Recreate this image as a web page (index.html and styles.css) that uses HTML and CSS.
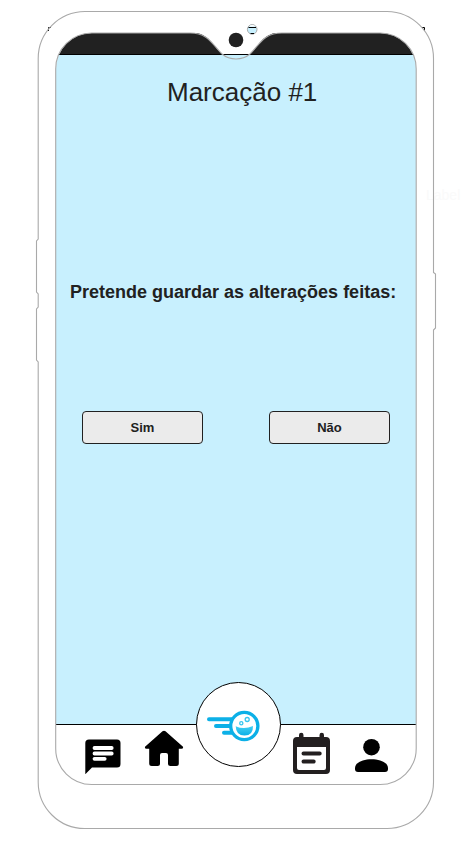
FILE: index.html
```html
<!DOCTYPE html>
<html lang="pt">
<head>
<meta charset="utf-8">
<title>Marcação #1</title>
<link rel="stylesheet" href="styles.css">
</head>
<body>
<div class="stage">
  <span class="ghost-label">Label</span>
  <div class="screen">
    <div class="status-bar"></div>
    <main class="content">
      <h1 class="title">Marcação #1</h1>
      <p class="question">Pretende guardar as alterações feitas:</p>
      <div class="actions">
        <button class="button" type="button">Sim</button>
        <button class="button" type="button">Não</button>
      </div>
    </main>
    <nav class="nav">
      <svg class="icon" viewBox="56 725 360 60" width="360" height="60">
        <path d="M89 739.5H117Q120.500 739.500 120.500 743V764Q120.500 767.500 117 767.500H92L85.300 774.300V743Q85.300 739.500 89 739.500Z"/>
        <path d="M94.500 748H111.700M94.500 753.500H111.700M94.500 758.800H104.700" stroke="#fff" stroke-width="3.800" stroke-linecap="round"/>
        <path d="M162.500 731.200Q164 730.200 165.500 731.200L183 746.700Q183.500 748.700 181.500 748.700H178.800V763.500Q178.800 766 176.300 766H170.500Q168 766 168 763.500V755Q168 753 166 753H162Q160 753 160 755V763.500Q160 766 157.500 766H151.700Q149.200 766 149.200 763.500V748.700H146.500Q144.500 748.700 145 746.700Z"/>
        <path fill="#231f20" fill-rule="evenodd" d="M297 737H299V735A2.200 2.200 0 0 1 303.500 735V737H319.500V735A2.200 2.200 0 0 1 324 735V737H326Q330 737 330 741V770Q330 774 326 774H297Q293 774 293 770V741Q293 737 297 737ZM297 747V768Q297 770 299 770H324Q326 770 326 768V747Z"/>
        <path d="M303.500 753.500H319.700M303.500 761.500H313.700" stroke="#231f20" stroke-width="4" stroke-linecap="round"/>
        <circle cx="371.500" cy="747.200" r="8.300"/>
        <path d="M355 768C355 762.500 363 759.300 371.500 759.300S388 762.500 388 768V769Q388 772 385 772H358Q355 772 355 769Z"/>
      </svg>
      <div class="logo">
        <svg viewBox="196 682 85 85" width="85" height="85">
          <defs>
            <linearGradient id="smile" x1="0" y1="0" x2="0" y2="1"><stop offset="0" stop-color="#45d0f3"/><stop offset="1" stop-color="#08afe6"/></linearGradient>
          </defs>
          <g fill="none" stroke="#0cb0e7" stroke-width="4" stroke-linecap="round">
            <path d="M209 719.200H234M216 726H231M224 732.700H232"/>
            <circle cx="244.300" cy="726" r="13.600" fill="#fff" stroke-width="3.300"/>
          </g>
          <path d="M235.700 726.200Q244 730 253 726Q253.300 735.400 244.500 735.600Q236 735.400 235.700 726.200Z" fill="url(#smile)"/>
          <g fill="none" stroke="#35c5ef" stroke-width="1.300"><circle cx="241.300" cy="723.200" r="1.600"/><circle cx="247.200" cy="719.500" r="2"/></g>
        </svg>
      </div>
    </nav>
  </div>
  <svg class="frame" viewBox="0 0 466 845" width="466" height="845">
    <path d="M48.500 31V27.500H51M422 27.500H424.500V31" fill="none" stroke="#000"/>
    <path d="M192 32H280C262 34 260 45 250 54H222C212 45 210 34 192 32Z" fill="#fff"/>
    <path d="M222 54.500H250" stroke="#000"/>
    <g fill="none" stroke="#a9a9a9" stroke-width="1.100">
      <path d="M85 11.500H387A47 47 0 0 1 433.500 58.500V272.500L435.500 274V328L433.500 330V782A46.500 46.500 0 0 1 387 828.500H85A46.500 46.500 0 0 1 38.200 782V362L36.500 360V309L38.200 307V294L36.500 292V241L38.200 239V58.500A47 47 0 0 1 85 11.500Z"/>
      <path d="M92 33H190C208 33 212 44 222 54Q228 59 236 59T250 54C260 44 264 33 282 33H380A36 36 0 0 1 416.200 69V748.500A36 36 0 0 1 380 784.500H92A36 36 0 0 1 55.700 748.500V69A36 36 0 0 1 92 33Z"/>
    </g>
    <circle cx="236" cy="40" r="7.300" fill="#212121"/>
    <circle cx="252.200" cy="29.400" r="4.800" fill="#c8f0fe" stroke="#aaa"/>
    <path d="M249 26.500A4.300 4.300 0 0 1 255.500 26.500Z" fill="#fff"/>
    <path d="M248.500 27.500H256M250.500 33.500H254" stroke="#000"/>
  </svg>
</div>
</body>
</html>
```
FILE: styles.css
```css
* { box-sizing: border-box; }
body {
  margin: 0;
  background: #fff;
  color: #212121;
  font-family: "Liberation Sans", Arial, sans-serif;
}
.stage {
  position: relative;
  width: 466px;
  height: 845px;
  padding: 33px 50px 0 56px;
  overflow: hidden;
}
.screen {
  display: flex;
  flex-direction: column;
  height: 752px;
  border-radius: 36px;
  overflow: hidden;
  background: #fff;
}
.status-bar {
  flex: none;
  height: 22px;
  background: #212121;
  border-bottom: 1px solid #000;
}
.content {
  flex: 1;
  display: flex;
  flex-direction: column;
  background: #c8f0fe;
}
.title {
  margin: 22px 0 0 111px;
  font-size: 26px;
  line-height: 30px;
  font-weight: 400;
  white-space: nowrap;
}
.question {
  margin: 175px 0 0 14px;
  font-size: 18px;
  line-height: 21px;
  font-weight: 700;
  white-space: nowrap;
}
.actions {
  display: flex;
  justify-content: space-between;
  margin: 108px 26px 0;
}
.button {
  width: 121px;
  height: 33px;
  padding: 0;
  border: 1px solid #212121;
  border-radius: 4px;
  background: #ebebeb;
  color: #212121;
  font: 700 13px/31px "Liberation Sans", Arial, sans-serif;
}
.nav {
  position: relative;
  flex: none;
  height: 61px;
  border-top: 1px solid #000;
  background: #fff;
}
.icon { display: block; }
.logo {
  position: absolute;
  left: 140px;
  top: -43px;
  width: 85px;
  height: 85px;
  border: 1px solid #000;
  border-radius: 50%;
  background: #fff;
}
.logo svg {
  display: block;
  margin: -1px;
}
.frame {
  position: absolute;
  left: 0;
  top: 0;
  pointer-events: none;
}
.ghost-label {
  position: absolute;
  left: 426px;
  top: 187px;
  color: #fafafa;
  font-size: 14px;
  line-height: 16px;
}
```
